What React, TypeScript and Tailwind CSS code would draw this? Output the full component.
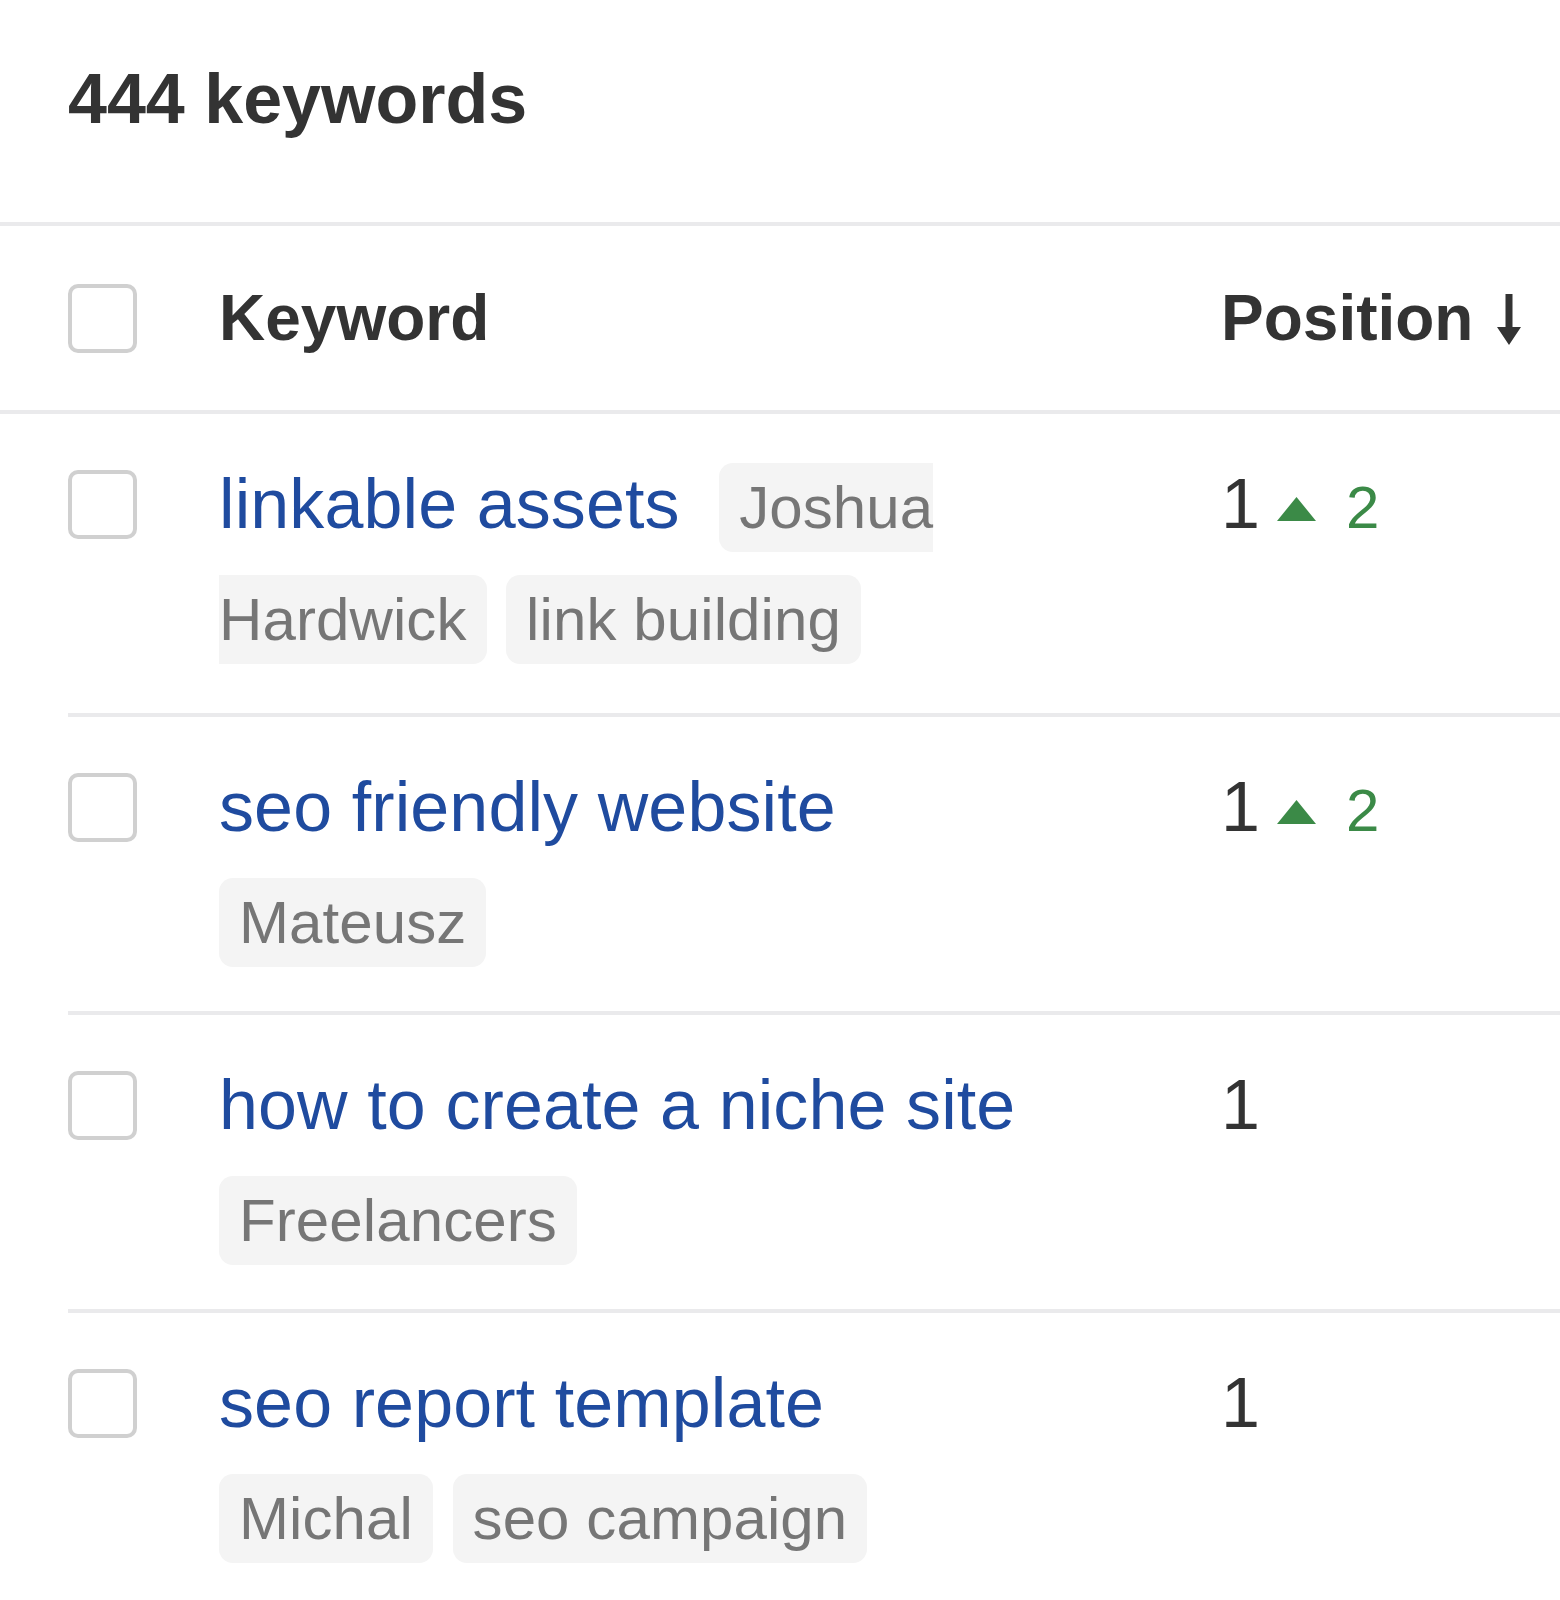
import React, { Fragment } from "react";

type Row = { kw: string; tags: string[]; pos: number; change?: number };

const rows: Row[] = [
  { kw: "linkable assets", tags: ["Joshua Hardwick", "link building"], pos: 1, change: 2 },
  { kw: "seo friendly website", tags: ["Mateusz"], pos: 1, change: 2 },
  { kw: "how to create a niche site", tags: ["Freelancers"], pos: 1 },
  { kw: "seo report template", tags: ["Michal", "seo campaign"], pos: 1 },
];

function Checkbox() {
  return <div className="w-[69px] h-[69px] shrink-0 rounded-[10px] border-[4px] border-[#d0d0d0] bg-white" />;
}

export default function App() {
  return (
    <div
      className="w-full bg-white text-[#333333] overflow-hidden"
      style={{ fontFamily: '"Liberation Sans", Arial, Helvetica, sans-serif' }}
    >
      <div className="h-[222px] pt-[64px] pl-[68px]">
        <h1 className="text-[70px] leading-[70px] font-bold">444 keywords</h1>
      </div>

      <div className="h-[192px] border-y-4 border-[#eaeaec] pl-[68px] grid grid-cols-[151px_1002px_1fr] items-center">
        <Checkbox />
        <div className="text-[64px] leading-none font-bold">Keyword</div>
        <div className="flex items-end text-[64px] leading-none font-bold">
          <span>Position</span>
          <svg className="ml-[24px] mb-[5px]" width="24" height="51" viewBox="0 0 24 51">
            <path d="M8.5 0 H15.5 V33 H24 L12 51 L0 33 H8.5 Z" fill="#333333" />
          </svg>
        </div>
      </div>

      <div>
        {rows.map((r, i) => (
          <div
            key={r.kw}
            className={
              "ml-[68px] grid grid-cols-[151px_1002px_1fr] " +
              (i === 0 ? "pt-[34px] pb-[41px]" : "pt-[34px] pb-[36px] border-t-4 border-[#eaeaec]")
            }
          >
            <div className="h-[112px] flex items-center">
              <Checkbox />
            </div>
            <div className="max-w-[840px] text-[70px] leading-[112px] tracking-[0.1px]">
              <span className="text-[#1f4b9f] mr-[20px]">{r.kw}</span>
              {r.tags.map((t) => (
                <Fragment key={t}>
                  {" "}
                  <span className="bg-[#f4f4f4] text-[#767676] text-[60px] leading-none px-[20px] py-[11px] rounded-[14px]">
                    {t}
                  </span>
                </Fragment>
              ))}
            </div>
            <div className="text-[70px] leading-[112px] whitespace-nowrap">
              <span>{r.pos}</span>
              {r.change !== undefined && (
                <>
                  <svg
                    className="inline-block align-baseline ml-[17px] mb-[7px]"
                    width="39"
                    height="24"
                    viewBox="0 0 39 24"
                  >
                    <path d="M19.5 0 L39 24 L0 24 Z" fill="#3b8a47" />
                  </svg>
                  <span className="ml-[30px] text-[60px] leading-none text-[#3b8a47]">{r.change}</span>
                </>
              )}
            </div>
          </div>
        ))}
      </div>
    </div>
  );
}
